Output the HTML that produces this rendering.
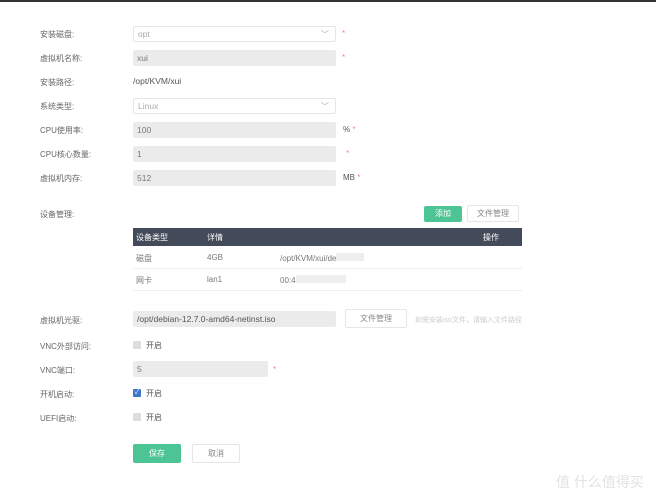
<!DOCTYPE html>
<html><head><meta charset="utf-8"><style>
*{margin:0;padding:0;box-sizing:border-box}
body{width:656px;height:500px;background:#fff;position:relative;overflow:hidden;font-family:"Liberation Sans","Noto Sans CJK SC",sans-serif;font-size:8px;color:#555}
.a{position:absolute;white-space:nowrap}
.lbl{left:40px;color:#666}
.in{position:absolute;left:133px;width:203px;height:16px;background:#ebebeb;border-radius:2px;padding-left:4px;line-height:17px;color:#777;font-size:8.5px}
.sel{background:#fff;border:1px solid #e6e6e6;color:#aaa;line-height:15px}
.star{color:#e88;}
.btn{position:absolute;border:1px solid #e6e6e6;background:#fff;text-align:center;color:#888;border-radius:2px}
.g{background:#4cc494;color:#fff;border-color:#4cc494}
.cb{position:absolute;left:133px;width:8px;height:8px;background:#ddd;border-radius:1px}
.td{position:absolute;color:#777}
</style></head><body>
<div class="a" style="left:0;top:0;width:656px;height:2px;background:#333"></div>
<div class="a lbl" style="top:29px">安装磁盘:</div>
<div class="in sel" style="top:26px">opt<span class="a" style="right:6px;top:0;color:#aaa">﹀</span></div>
<div class="a star" style="left:342px;top:29px">*</div>
<div class="a lbl" style="top:53px">虚拟机名称:</div>
<div class="in" style="top:50px">xui</div>
<div class="a star" style="left:342px;top:53px">*</div>
<div class="a lbl" style="top:77px">安装路径:</div>
<div class="a" style="left:133px;top:76px;color:#555;font-size:8.5px">/opt/KVM/xui</div>
<div class="a lbl" style="top:101px">系统类型:</div>
<div class="in sel" style="top:98px">Linux<span class="a" style="right:6px;top:0;color:#aaa">﹀</span></div>
<div class="a lbl" style="top:125px">CPU使用率:</div>
<div class="in" style="top:122px">100</div>
<div class="a" style="left:343px;top:125px">% <span class="star">*</span></div>
<div class="a lbl" style="top:149px">CPU核心数量:</div>
<div class="in" style="top:146px">1</div>
<div class="a star" style="left:346px;top:149px">*</div>
<div class="a lbl" style="top:173px">虚拟机内存:</div>
<div class="in" style="top:170px">512</div>
<div class="a" style="left:343px;top:173px">MB <span class="star">*</span></div>
<div class="a lbl" style="top:209px">设备管理:</div>
<div class="btn g" style="left:424px;top:206px;width:38px;height:16px;line-height:14px">添加</div>
<div class="btn" style="left:467px;top:205px;width:52px;height:17px;line-height:15px">文件管理</div>
<div class="a" style="left:133px;top:228px;width:389px;height:18px;background:#434a5a"></div>
<div class="a" style="left:136px;top:232px;color:#fff">设备类型</div>
<div class="a" style="left:207px;top:232px;color:#fff">详情</div>
<div class="a" style="left:483px;top:232px;color:#fff">操作</div>
<div class="td" style="left:136px;top:253px">磁盘</div><div class="td" style="left:207px;top:253px">4GB</div><div class="td" style="left:280px;top:253px">/opt/KVM/xui/de<span style="display:inline-block;width:28px;height:8px;background:#eee"></span></div>
<div class="a" style="left:133px;top:268px;width:389px;height:1px;background:#eee"></div>
<div class="td" style="left:136px;top:275px">网卡</div><div class="td" style="left:207px;top:275px">lan1</div><div class="td" style="left:280px;top:275px">00:4<span style="display:inline-block;width:50px;height:8px;background:#eee"></span></div>
<div class="a" style="left:133px;top:290px;width:389px;height:1px;background:#eee"></div>
<div class="a lbl" style="top:315px">虚拟机光驱:</div>
<div class="in" style="top:311px;color:#555">/opt/debian-12.7.0-amd64-netinst.iso</div>
<div class="btn" style="left:345px;top:309px;width:62px;height:19px;line-height:17px">文件管理</div>
<div class="a" style="left:415px;top:315px;color:#ccc;font-size:7px">如需安装iso文件，请输入文件路径</div>
<div class="a lbl" style="top:341px">VNC外部访问:</div>
<div class="cb" style="top:341px"></div><div class="a" style="left:146px;top:340px">开启</div>
<div class="a lbl" style="top:365px">VNC端口:</div>
<div class="in" style="top:361px;width:135px">5</div>
<div class="a star" style="left:273px;top:365px">*</div>
<div class="a lbl" style="top:389px">开机启动:</div>
<div class="cb" style="top:389px;background:#3a78c9;color:#fff;font-size:7px;line-height:8px;text-align:center">✓</div><div class="a" style="left:146px;top:388px">开启</div>
<div class="a lbl" style="top:413px">UEFI启动:</div>
<div class="cb" style="top:413px"></div><div class="a" style="left:146px;top:412px">开启</div>
<div class="btn g" style="left:133px;top:444px;width:48px;height:19px;line-height:17px">保存</div>
<div class="btn" style="left:192px;top:444px;width:48px;height:19px;line-height:17px">取消</div>
<div class="a" style="left:556px;top:472px;font-size:14px;color:#e2e2e2">值 什么值得买</div>
</body></html>
